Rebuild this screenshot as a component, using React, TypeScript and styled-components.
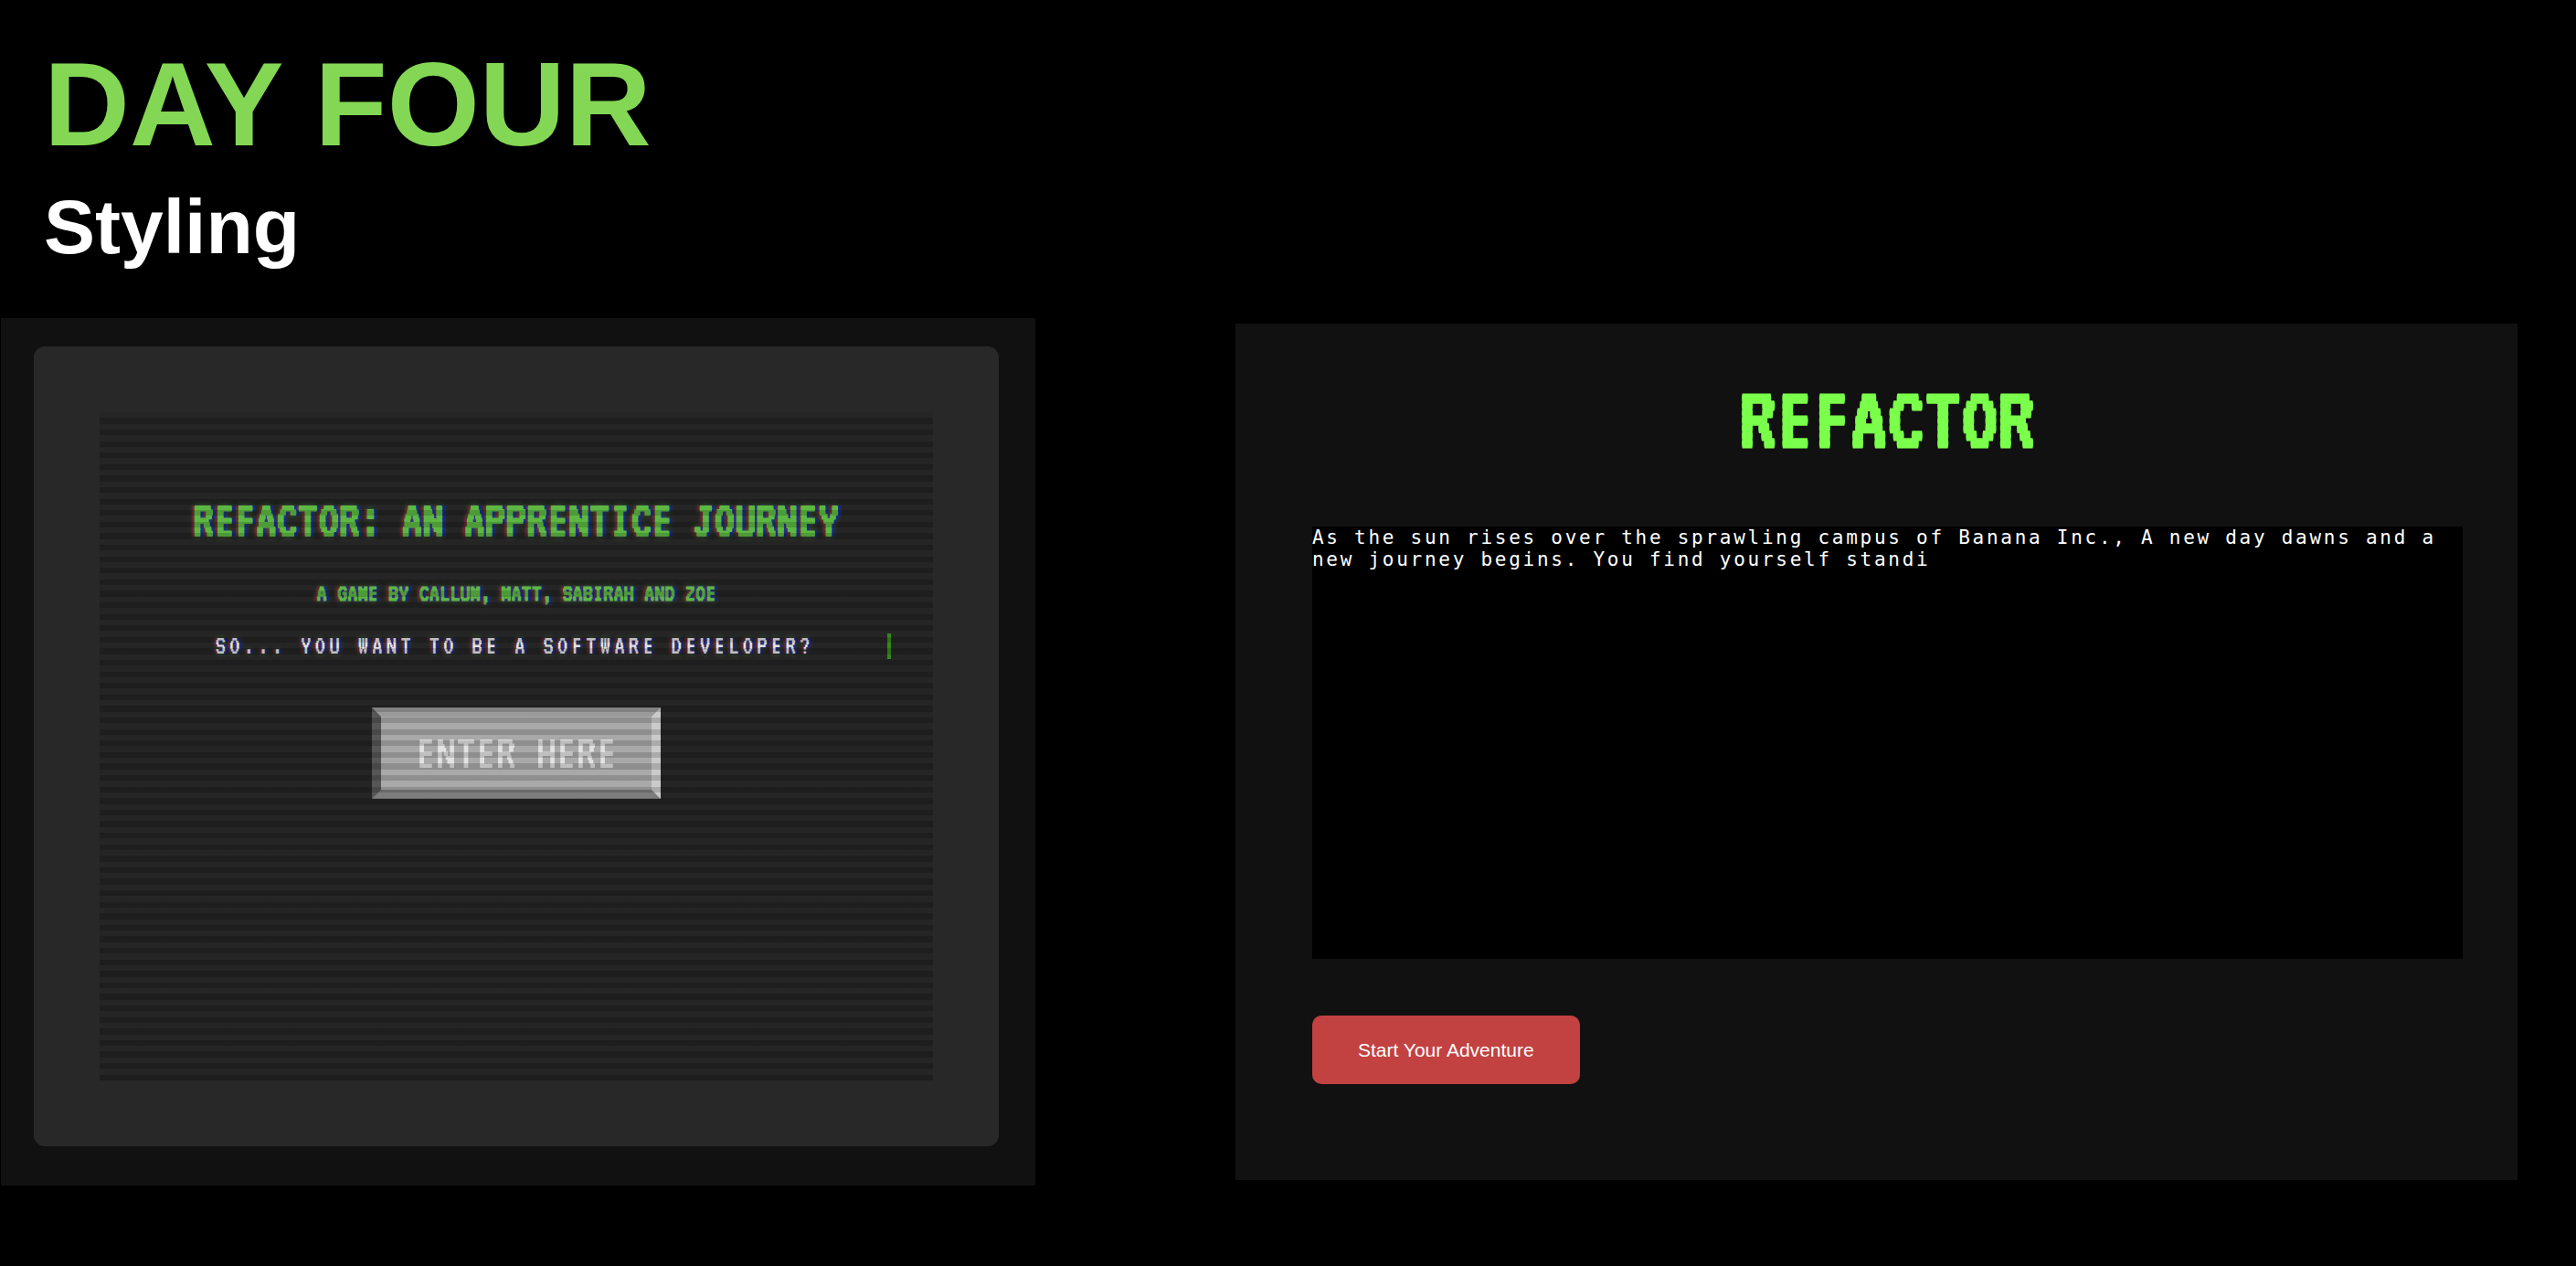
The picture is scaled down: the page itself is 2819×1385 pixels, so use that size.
import React from "react";
import styled, { createGlobalStyle } from "styled-components";

const pixelFont = `"VT323", "Noto Sans Mono CJK SC", "DejaVu Sans Mono", monospace`;

const GlobalStyle = createGlobalStyle`
  *, *::before, *::after { box-sizing: border-box; }
  body {
    margin: 0;
    background: #000;
    font-family: "Liberation Sans", Arial, sans-serif;
  }
  h1, h2, h3, p { margin: 0; }
`;

const Page = styled.main`
  min-height: 100vh;
  background: #000;
`;

const SlideHeader = styled.header`
  display: flex;
  flex-direction: column;
  gap: 16px;
  padding: 44px 48px 52px;
`;

const SlideTitle = styled.h1`
  color: #83d754;
  font-size: 130px;
  line-height: 140px;
  font-weight: 700;
`;

const SlideSubtitle = styled.h2`
  color: #fff;
  font-size: 84px;
  line-height: 96px;
  font-weight: 700;
`;

const Showcase = styled.div`
  display: grid;
  grid-template-columns: 1132fr 1403fr;
  align-items: center;
  column-gap: 219px;
  padding: 0 64px 0 1px;
`;

const CrtPanel = styled.section`
  padding: 31px 40px 43px 36px;
  background: #111;
`;

const Monitor = styled.div`
  padding: 72px;
  border-radius: 12px;
  background: #282828;
`;

const Screen = styled.div`
  position: relative;
  display: flex;
  flex-direction: column;
  align-items: center;
  min-height: 731px;
  padding-top: 89px;
  font-family: ${pixelFont};
  text-align: center;
  text-shadow:
    3px 0 1px rgba(0, 30, 255, 0.5),
    -3px 0 1px rgba(255, 0, 80, 0.3),
    0 0 6px rgba(102, 204, 73, 0.5);

  &::after {
    content: "";
    position: absolute;
    inset: 0;
    pointer-events: none;
    background: repeating-linear-gradient(
      to bottom,
      rgba(18, 16, 16, 0.12) 0,
      rgba(18, 16, 16, 0.12) calc(50% / 58),
      rgba(0, 0, 0, 0.25) calc(50% / 58),
      rgba(0, 0, 0, 0.25) calc(100% / 58)
    );
  }
`;

const GameTitle = styled.h3`
  color: #67cf49;
  font-size: 57px;
  line-height: 58px;
  font-weight: 700;
`;

const Credits = styled.p`
  margin-top: 35px;
  color: #67cf49;
  font-size: 28px;
  line-height: 32px;
  font-weight: 700;
`;

const Typewriter = styled.p`
  width: 90%;
  margin-top: 28px;
  border-right: 4px solid #3a9a1a;
  color: #fff;
  font-size: 29px;
  line-height: 28px;
  letter-spacing: 4px;
  white-space: nowrap;
`;

const EnterButton = styled.button`
  height: 100px;
  margin-top: 53px;
  padding: 0 38px;
  border: 10px solid;
  border-color: #adadad #e4e4e4 #8c8c8c #606060;
  background: #bebebe;
  color: #fff;
  font-family: ${pixelFont};
  font-size: 55px;
  line-height: 58px;
  cursor: pointer;
`;

const StoryPanel = styled.section`
  display: flex;
  flex-direction: column;
  align-items: flex-start;
  padding: 55px 60px 105px 84px;
  background: #111;
`;

const StoryTitle = styled.h3`
  align-self: center;
  color: #7aff4b;
  font-family: ${pixelFont};
  font-size: 101px;
  line-height: 100px;
  font-weight: 700;
`;

const StoryBox = styled.p`
  align-self: stretch;
  min-height: 473px;
  margin-top: 67px;
  background: #000;
  color: #fff;
  font-family: Menlo, "DejaVu Sans Mono", monospace;
  font-size: 21px;
  line-height: 24px;
  letter-spacing: 0.13em;
`;

const StartButton = styled.button`
  height: 75px;
  margin-top: 62px;
  padding: 0 50px;
  border: 0;
  border-radius: 10px;
  background: #c24141;
  color: #fff;
  font-family: "Liberation Sans", Arial, sans-serif;
  font-size: 21px;
  cursor: pointer;
`;

export default function App() {
  return (
    <>
      <GlobalStyle />
      <Page>
        <SlideHeader>
          <SlideTitle>DAY FOUR</SlideTitle>
          <SlideSubtitle>Styling</SlideSubtitle>
        </SlideHeader>
        <Showcase>
          <CrtPanel>
            <Monitor>
              <Screen>
                <GameTitle>REFACTOR: AN APPRENTICE JOURNEY</GameTitle>
                <Credits>A GAME BY CALLUM, MATT, SABIRAH AND ZOE</Credits>
                <Typewriter>SO... YOU WANT TO BE A SOFTWARE DEVELOPER?</Typewriter>
                <EnterButton type="button">ENTER HERE</EnterButton>
              </Screen>
            </Monitor>
          </CrtPanel>
          <StoryPanel>
            <StoryTitle>REFACTOR</StoryTitle>
            <StoryBox>
              As the sun rises over the sprawling campus of Banana Inc., A new day dawns
              and a new journey begins. You find yourself standi
            </StoryBox>
            <StartButton type="button">Start Your Adventure</StartButton>
          </StoryPanel>
        </Showcase>
      </Page>
    </>
  );
}
